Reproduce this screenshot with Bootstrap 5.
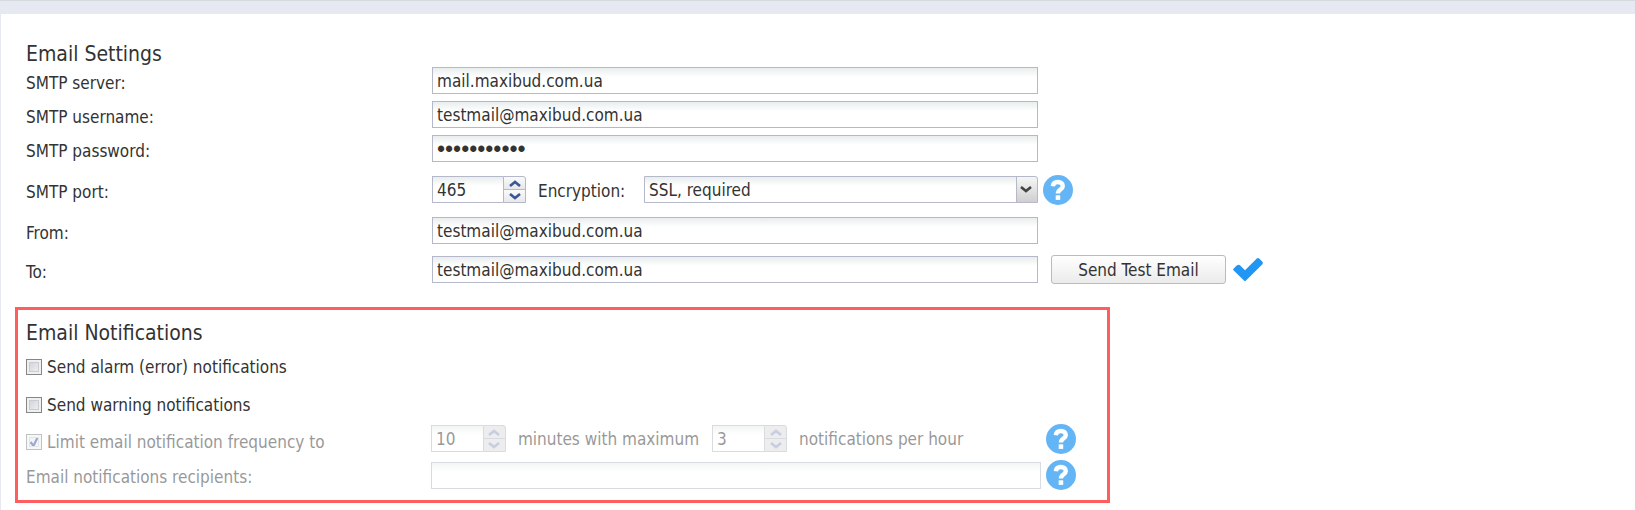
<!DOCTYPE html>
<html lang="en">
<head>
<meta charset="utf-8">
<meta name="viewport" content="width=device-width, initial-scale=1">
<title>Email Settings</title>
<link href="https://cdn.jsdelivr.net/npm/bootstrap@5.3.0/dist/css/bootstrap.min.css" rel="stylesheet">
<style>
  body { font-family: "DejaVu Sans Condensed", Tahoma, "Noto Sans", sans-serif; font-size: 17px; line-height: 24px; color: #333; background: #fff; }
  .top-strip { height: 14px; background: #e6e9f1; border-top: 1px solid #d6dadf; }
  .panel { border-left: 1px solid #e6e9f1; min-height: calc(100vh - 14px); padding: 27px 0 7px; }
  .section-title { font-size: 21px; line-height: 26px; font-weight: 400; margin: 0; }
  .form-line { display: grid; align-items: center; }
  .settings { padding-left: 25px; }
  .settings .form-line { grid-template-columns: 406fr 606fr 597fr; grid-template-rows: 27px; margin-bottom: 7px; }
  .settings .form-line.roomy { margin-bottom: 14px; }
  .settings .form-line.sender { margin-bottom: 12px; }
  .form-line > label { padding-top: 4px; }

  .form-control.field, .form-select.field { height: 27px; padding: 1px 4px 0; border: 1px solid #b5b8c8; border-radius: 0; color: #333; font-size: 17px; line-height: 24px; min-width: 0; background: #fff linear-gradient(#e9edee, #fff 9px) no-repeat; }
  .form-control.field[type=password] { font-family: "Liberation Sans", sans-serif; font-size: 23px; }
  .form-select.field {
    border-top-right-radius: 3px; padding-right: 26px;
    background:
      url("data:image/svg+xml,%3Csvg xmlns='http://www.w3.org/2000/svg' width='12' height='7'%3E%3Cpath d='M1 1l5 4 5-4' fill='none' stroke='%23444' stroke-width='2.600'/%3E%3C/svg%3E") right 5px top 9px / 12px 7px no-repeat,
      linear-gradient(#b5b8c8, #b5b8c8) right 20px top / 1px 100% no-repeat,
      linear-gradient(#f6f6f6, #cfcfcf) right top / 20px 100% no-repeat,
      linear-gradient(#e9edee, #fff 9px);
  }
  .spinner { display: flex; height: 27px; flex: none; }
  .spinner .field { appearance: textfield; flex: 1; border-right: 0; }
  .spinner .field::-webkit-inner-spin-button { appearance: none; margin: 0; }
  .spin-keys { display: grid; grid-template-rows: 1fr 1fr; width: 23px; border: 1px solid #b5b8c8; border-radius: 0 3px 0 0; background: #b5b8c8; row-gap: 1px; overflow: hidden; }
  .spin-keys button { display: flex; align-items: center; justify-content: center; border: 0; padding: 0; min-height: 0; background: linear-gradient(#fafafa, #e8e8ea); color: #3a5795; }
  .spin-keys button:disabled { background: #dcdcdc; color: #929fc4; }
  .spin-keys svg { width: 12px; height: 7px; }
  .spin-port { width: 94px; }
  .spin-limit { width: 75px; }
  .enc-label { padding: 3px 0 0 12px; flex: 0 0 118px; }

  .help { width: 30px; height: 30px; margin-left: 5px; padding: 0; border: 0; background: none; display: block; }
  .help svg { display: block; width: 30px; height: 30px; }
  .done-mark { display: block; width: 30px; height: 30px; }
  .send-cell { padding-left: 13px; gap: 7px; }
  .btn.btn-test { height: 29px; width: 175px; padding: 0; font-size: 17px; line-height: 26px; color: #333; border: 1px solid #bbb; border-radius: 3px; background: linear-gradient(#fff, #ebebeb); }

  .notify { width: 67%; margin: 24px 0 0 14px; border: 3px solid #ff5e5e; padding: 10px 0 10px 8px; }
  .notify .form-line { grid-template-columns: 405fr 610fr 66fr; }
  .check-line { display: flex; align-items: center; gap: 5px; height: 24px; }
  .alarm { margin-top: 9px; }
  .warn { margin-top: 14px; }
  .limit { margin: 3px 0; height: 37px; }
  .limit .check-line { height: 32px; padding-top: 7px; }
  .note { padding: 0 13px 0 12px; white-space: nowrap; }
  .tick.form-check-input { width: 16px; height: 16px; margin: 0; flex: none; border: 1px solid #858686; border-radius: 0; box-shadow: inset 0 0 0 2px #f0f0f0, inset 0 0 0 3px #c9ccd2; background: linear-gradient(135deg, #c9cdd4, #f6f6f6); }
  .tick.form-check-input:checked { background: url("data:image/svg+xml,%3Csvg xmlns='http://www.w3.org/2000/svg' viewBox='0 0 14 14'%3E%3Cpath d='M3.500 7l3 4 4-8.500' fill='none' stroke='%233a55a5' stroke-width='2.200'/%3E%3C/svg%3E"), linear-gradient(135deg, #e2e4e8, #f6f6f6); }
  .muted-line label, .muted-line .note, .muted-line .spinner, .muted-line > .field, .muted-line .check-line label, .muted-line .form-check-input:disabled { opacity: .5; }
</style>
</head>
<body>
<svg class="d-none" aria-hidden="true">
  <symbol id="help-mark" viewBox="0 0 30 30">
    <circle cx="15" cy="15" r="15" fill="#64b5f6"/>
    <path d="M9.800 11.200C10.200 8.200 12 7 14.800 7c3 0 5 1.500 5 3.900 0 3.900-4.900 3.300-4.900 7.600" fill="none" stroke="#fff" stroke-width="4.400"/>
    <path d="M12.700 20.300h4.500v4.600h-4.500z" fill="#fff"/>
  </symbol>
  <symbol id="key-up" viewBox="0 0 12 7"><path d="M1 6l5-4 5 4" fill="none" stroke="currentColor" stroke-width="2.600"/></symbol>
  <symbol id="key-down" viewBox="0 0 12 7"><path d="M1 1l5 4 5-4" fill="none" stroke="currentColor" stroke-width="2.600"/></symbol>
</svg>
<div class="top-strip"></div>
<main class="panel">
  <form>
    <section class="settings">
      <h1 class="section-title">Email Settings</h1>
      <div class="form-line"><label for="server">SMTP server:</label><input class="form-control field" id="server" type="text" value="mail.maxibud.com.ua"></div>
      <div class="form-line"><label for="user">SMTP username:</label><input class="form-control field" id="user" type="text" value="testmail@maxibud.com.ua"></div>
      <div class="form-line roomy"><label for="pass">SMTP password:</label><input class="form-control field" id="pass" type="password" value="secretmail1"></div>
      <div class="form-line roomy">
        <label for="port">SMTP port:</label>
        <div class="d-flex align-items-center">
          <div class="spinner spin-port">
            <input class="form-control field" id="port" type="number" value="465">
            <div class="spin-keys">
              <button type="button" aria-label="Increase port"><svg><use href="#key-up"/></svg></button>
              <button type="button" aria-label="Decrease port"><svg><use href="#key-down"/></svg></button>
            </div>
          </div>
          <label class="enc-label" for="enc">Encryption:</label>
          <select class="form-select field" id="enc"><option>SSL, required</option></select>
        </div>
        <button class="help" type="button" aria-label="Help on encryption"><svg><use href="#help-mark"/></svg></button>
      </div>
      <div class="form-line sender"><label for="from">From:</label><input class="form-control field" id="from" type="text" value="testmail@maxibud.com.ua"></div>
      <div class="form-line mb-0">
        <label for="to">To:</label><input class="form-control field" id="to" type="text" value="testmail@maxibud.com.ua">
        <div class="send-cell d-flex align-items-center">
          <button class="btn btn-test" type="button">Send Test Email</button>
          <svg class="done-mark" viewBox="0 0 30 30" role="img" aria-label="Sent"><path d="M4 10.300Q5.500 9 7 10.300L12 15.200 23.800 3.600Q25 2.600 26.200 3.600L29.400 6.800Q30.300 8 29.400 9.200L13 25.500Q12 26.500 11 25.500L.7 15.500Q-.3 14.500 .7 13.500Z" fill="#2196f3"/></svg>
        </div>
      </div>
    </section>

    <section class="notify">
      <h2 class="section-title">Email Notifications</h2>
      <div class="check-line alarm"><input class="form-check-input tick" type="checkbox" id="alarm"><label for="alarm">Send alarm (error) notifications</label></div>
      <div class="check-line warn"><input class="form-check-input tick" type="checkbox" id="warn"><label for="warn">Send warning notifications</label></div>
      <div class="form-line muted-line limit">
        <div class="check-line"><input class="form-check-input tick" type="checkbox" id="limit" checked disabled><label for="limit">Limit email notification frequency to</label></div>
        <div class="d-flex align-items-center">
          <div class="spinner spin-limit">
            <input class="form-control field" type="number" value="10" aria-label="Minutes" disabled>
            <div class="spin-keys">
              <button type="button" aria-label="More minutes" disabled><svg><use href="#key-up"/></svg></button>
              <button type="button" aria-label="Fewer minutes" disabled><svg><use href="#key-down"/></svg></button>
            </div>
          </div>
          <span class="note">minutes with maximum</span>
          <div class="spinner spin-limit">
            <input class="form-control field" type="number" value="3" aria-label="Maximum notifications" disabled>
            <div class="spin-keys">
              <button type="button" aria-label="More notifications" disabled><svg><use href="#key-up"/></svg></button>
              <button type="button" aria-label="Fewer notifications" disabled><svg><use href="#key-down"/></svg></button>
            </div>
          </div>
          <span class="note">notifications per hour</span>
        </div>
        <button class="help" type="button" aria-label="Help on frequency"><svg><use href="#help-mark"/></svg></button>
      </div>
      <div class="form-line muted-line">
        <label for="rcpt">Email notifications recipients:</label>
        <input class="form-control field" id="rcpt" type="text" disabled>
        <button class="help" type="button" aria-label="Help on recipients"><svg><use href="#help-mark"/></svg></button>
      </div>
    </section>
  </form>
</main>
<script src="https://cdn.jsdelivr.net/npm/bootstrap@5.3.0/dist/js/bootstrap.bundle.min.js"></script>
</body>
</html>
